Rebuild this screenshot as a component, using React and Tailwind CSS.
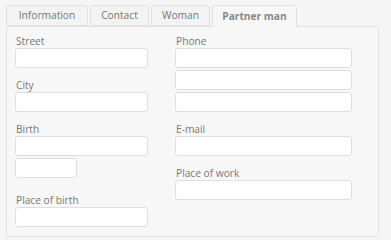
const tabs = [
  { name: 'Information', w: 'w-[82px]' },
  { name: 'Contact', w: 'w-[59px]' },
  { name: 'Woman', w: 'w-[59px]' },
  { name: 'Partner man', w: 'w-[85px]', active: true },
]

function Label({ children, className = '' }) {
  return <div className={`h-[15px] text-[10.2px] leading-[17px] pl-px text-[#777] ${className}`}>{children}</div>
}

function Input({ className = 'w-[133px]' }) {
  return <div className={`h-[20px] rounded-[3px] border border-[#dedede] bg-white ${className}`} />
}

export default function App() {
  return (
    <div className="w-[391px] h-[240px] bg-[#f5f5f5] pt-[5px] pl-[6px]" style={{ fontFamily: '"Open Sans", "Noto Sans", sans-serif' }}>
      <div className="flex gap-[2px] h-[21px] relative z-10">
        {tabs.map((t) => (
          <div
            key={t.name}
            className={`${t.w} flex items-center justify-center pt-px rounded-t-[3px] border border-[#e0e0e0] text-[10.2px] ${
              t.active
                ? 'h-[22px] border-b-0 bg-[#f7f7f7] font-bold text-[#888]'
                : 'h-[21px] bg-[#f3f3f3] text-[#777]'
            }`}
          >
            {t.name}
          </div>
        ))}
      </div>
      <div className="w-[373px] h-[211px] border border-[#e2e2e2] rounded-b-[3px] rounded-tr-[3px] bg-[#f7f7f7] pl-[8px] pt-[6px] flex gap-[27px]">
        <div className="flex flex-col">
          <Label>Street</Label>
          <Input />
          <Label className="mt-[9px]">City</Label>
          <Input />
          <Label className="mt-[9px]">Birth</Label>
          <Input />
          <Input className="w-[62px] mt-[2px]" />
          <Label className="mt-[14px]">Place of birth</Label>
          <Input />
        </div>
        <div className="flex flex-col">
          <Label>Phone</Label>
          <Input className="w-[177px]" />
          <Input className="w-[177px] mt-[2px]" />
          <Input className="w-[177px] mt-[2px]" />
          <Label className="mt-[9px]">E-mail</Label>
          <Input className="w-[177px]" />
          <Label className="mt-[9px]">Place of work</Label>
          <Input className="w-[177px]" />
        </div>
      </div>
    </div>
  )
}
